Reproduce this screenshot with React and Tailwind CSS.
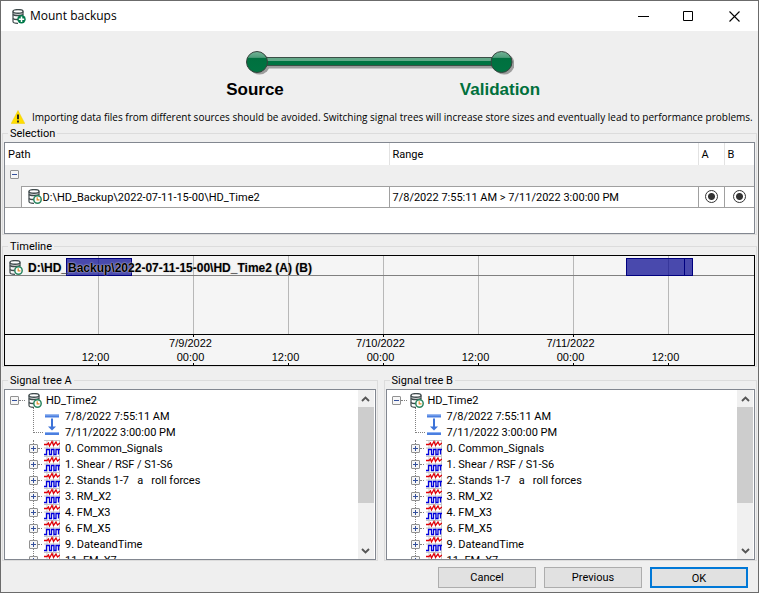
import React, { useState } from 'react';

const HOUR_WIDTH = 95 / 12;
const CHART_WIDTH = 749;

const ticks = [
  { at: 93, time: '12:00' },
  { at: 188, time: '00:00', day: '7/9/2022' },
  { at: 283, time: '12:00' },
  { at: 378, time: '00:00', day: '7/10/2022' },
  { at: 473, time: '12:00' },
  { at: 568, time: '00:00', day: '7/11/2022' },
  { at: 663, time: '12:00' },
];

const blocks = [
  { at: 61, hours: 8.4 },
  { at: 621, hours: 7.5 },
  { at: 679, hours: 1.2 },
];

const signals = [
  '0. Common_Signals',
  '1. Shear / RSF / S1-S6',
  '2. Stands 1-7   a   roll forces',
  '3. RM_X2',
  '4. FM_X3',
  '6. FM_X5',
  '9. DateandTime',
  '11. FM_X7',
];

const pct = (px) => `${(px / CHART_WIDTH) * 100}%`;

function DatabaseIcon({ badge = 'clock' }) {
  return (
    <svg width="14" height="15" viewBox="0 0 14 15" fill="none" className="shrink-0">
      <path d="M1 2.5v10c0 1 2 1.800 5 1.800M11 2.500v4" stroke="#3f4a4c" strokeWidth="1.2" />
      <ellipse cx="6" cy="2.400" rx="5" ry="1.800" fill="#fff" stroke="#3f4a4c" strokeWidth="1.400" />
      <path d="M1 5.500c1 1.300 9 1.300 10 0M1 9.500c1 1 3 1.200 5 1.100" stroke="#3f4a4c" strokeWidth="1.500" />
      {badge === 'clock' ? (
        <>
          <circle cx="9.500" cy="10.500" r="3.700" fill="#fff" stroke="#2a8560" strokeWidth="1.500" />
          <path d="M9.200 8.300v2.500h2.300" stroke="#e3902c" strokeWidth="1.200" />
        </>
      ) : (
        <>
          <circle cx="9.500" cy="10.300" r="4.200" fill="#00794a" />
          <path d="M9.500 7.600v5.400M6.800 10.300h5.400" stroke="#fff" strokeWidth="1.500" />
        </>
      )}
    </svg>
  );
}

function RangeIcon() {
  return (
    <svg width="14" height="22" viewBox="0 0 14 22" className="shrink-0">
      <path d="M0 .5h14v3H0zM0 18h14v3H0z" fill="#4b7fe0" />
      <path d="M0 .5h14v1H0zM0 18h14v1H0z" fill="#8db1f2" />
      <path d="M6 4.500h2v8h3l-4 4-4-4h3z" fill="#3d73d8" />
    </svg>
  );
}

function SignalIcon() {
  return (
    <svg width="16" height="16" viewBox="0 0 16 16" className="shrink-0">
      <path d="M0 0h16v16H0z" fill="#fff" />
      <path d="M0 .5h16M0 8h16M3 0v16M9.500 0v16M15.500 0v16" stroke="#c6c6c6" />
      <path d="M0 4.500h3L4.500 3l1 3L8 1.500l1.500 4L12 2l1.500 3L16 3" fill="none" stroke="#e00008" strokeWidth="1.300" />
      <path d="M0 14.500h2.500v-5h3v5h2v-5H10v5h2v-5h2.500v5M14.500 9.500H16" fill="none" stroke="#0000dc" strokeWidth="1.300" />
    </svg>
  );
}

function Expander({ open, label }) {
  return (
    <button aria-label={label} className="flex h-[9px] w-[9px] shrink-0 items-center justify-center rounded-[1px] border border-[#919191] bg-[#f6f6f6]">
      <svg width="7" height="7" viewBox="0 0 7 7" className="shrink-0">
        <path d={open ? 'M1 3.5h5' : 'M1 3.5h5M3.5 1v5'} stroke="#34509c" />
      </svg>
    </button>
  );
}

function Group({ title, children }) {
  return (
    <fieldset className="min-w-0 border border-[#dcdcdc] px-px pt-[2px]">
      <legend className="ml-[4px] px-[2px] pt-[2px] leading-[12px]">{title}</legend>
      {children}
    </fieldset>
  );
}

function Stepper() {
  return (
    <div className="flex flex-col items-center pt-[19px] font-['Liberation_Sans',Arial,sans-serif]">
      <svg width="269" height="26" viewBox="0 0 269 26">
        <defs>
          <linearGradient id="shine" x1="0" y1="0" x2="0" y2="1">
            <stop offset="0" stopColor="#75b397" />
            <stop offset=".28" stopColor="#4f9d7b" />
            <stop offset=".32" stopColor="#00703f" />
            <stop offset="1" stopColor="#007442" />
          </linearGradient>
        </defs>
        <g fill="#9d9d9d">
          <circle cx="14.500" cy="14" r="10.500" />
          <circle cx="259" cy="14" r="10.500" />
          <path d="M14 10h244v8.500H14z" />
        </g>
        <path d="M12 7.500h245v8H12z" fill="#007442" stroke="#3b4f46" />
        <path d="M12 8h245v3H12z" fill="#62a888" />
        <circle cx="12" cy="12" r="10.500" fill="url(#shine)" stroke="#37443e" />
        <circle cx="256.500" cy="12" r="10.500" fill="url(#shine)" stroke="#37443e" />
      </svg>
      <div className="mr-[4px] grid w-[490px] grid-cols-2 text-center text-[17px] leading-[28px] font-bold">
        <span>Source</span>
        <span className="text-[#00703c]">Validation</span>
      </div>
    </div>
  );
}

function SelectionTable() {
  const [inA, setInA] = useState(true);
  const [inB, setInB] = useState(true);
  const radio = "m-auto block h-[13px] w-[13px] appearance-none rounded-full border border-[#333] bg-white checked:bg-[radial-gradient(circle,#333_3px,#fff_4px)]";

  return (
    <div className="h-[92px] border border-[#828790] bg-white leading-[16px]">
      <table className="w-full table-fixed border-collapse text-left">
        <colgroup>
          <col className="w-[16px]" />
          <col />
          <col className="w-[309px]" />
          <col className="w-[26px]" />
          <col className="w-[30px]" />
        </colgroup>
        <thead>
          <tr className="h-[22px]">
            <th colSpan={2} className="px-[3px] pt-[2px] font-normal">Path</th>
            <th className="border-l border-[#e2e2e2] px-[3px] pt-[2px] font-normal">Range</th>
            <th className="border-l border-[#e2e2e2] px-[3px] pt-[2px] font-normal">A</th>
            <th className="border-l border-[#e2e2e2] px-[3px] pt-[2px] font-normal">B</th>
          </tr>
        </thead>
        <tbody>
          <tr className="h-[21px] bg-[#efefef]">
            <td colSpan={5} className="px-[5px] pb-[2px]"><Expander open label="Collapse group" /></td>
          </tr>
          <tr className="h-[21px]">
            <td className="border-b border-[#a0a0a0] bg-[#efefef]"></td>
            <td className="border border-[#a0a0a0] px-[6px]">
              <div className="flex items-center gap-px whitespace-nowrap">
                <DatabaseIcon />
                <span className="pt-[2px]">D:\HD_Backup\2022-07-11-15-00\HD_Time2</span>
              </div>
            </td>
            <td className="border border-[#a0a0a0] px-[3px] pt-[2px] whitespace-nowrap">7/8/2022 7:55:11 AM &gt; 7/11/2022 3:00:00 PM</td>
            <td className="border border-[#a0a0a0]">
              <input type="radio" name="treeA" aria-label="Use for A" className={radio} checked={inA} onChange={() => setInA(true)} />
            </td>
            <td className="border-y border-[#a0a0a0]">
              <input type="radio" name="treeB" aria-label="Use for B" className={radio} checked={inB} onChange={() => setInB(true)} />
            </td>
          </tr>
        </tbody>
      </table>
    </div>
  );
}

function Timeline() {
  return (
    <div className="border border-black bg-[#f5f5f5] font-['Liberation_Sans',Arial,sans-serif]">
      <div className="relative h-[79px] border-b border-black">
        {ticks.map((t) => (
          <span key={t.at} className="absolute inset-y-0 w-px bg-[#b8b8b8]" style={{ left: pct(t.at) }} />
        ))}
        <div className="absolute inset-x-0 top-[19px] h-px bg-[#808080]" />
        {blocks.map((b) => (
          <span
            key={b.at}
            className="absolute top-[2px] h-[18px] border border-[#00007f] bg-[#00008f]/70"
            style={{ left: pct(b.at), width: pct(b.hours * HOUR_WIDTH) }}
          />
        ))}
        <div className="relative flex h-[20px] items-center gap-[5px] pt-[3px] pl-[4px] text-[12px] font-bold whitespace-nowrap">
          <DatabaseIcon />
          <span className="[text-shadow:0_0_2px_#d0d0d0,0_0_1px_#c0c0c0]">D:\HD_Backup\2022-07-11-15-00\HD_Time2 (A) (B)</span>
        </div>
      </div>
      <div className="relative h-[30px]">
        {ticks.map((t) => (
          <div key={t.at} className="absolute inset-y-0 flex w-px flex-col justify-end" style={{ left: pct(t.at) }}>
            {t.day && <span className="absolute top-0 left-0 h-[2px] w-px bg-black" />}
            <span className="absolute bottom-0 left-0 h-[2px] w-px bg-black" />
            <div className="flex flex-col items-center self-center pr-[6px] pb-px leading-[14px] whitespace-nowrap">
              <span>{t.day}</span>
              <span>{t.time}</span>
            </div>
          </div>
        ))}
      </div>
    </div>
  );
}

function ScrollArrow({ up }) {
  return (
    <button aria-label={up ? 'Scroll up' : 'Scroll down'} className="flex h-[17px] w-full items-center justify-center">
      <svg width="9" height="6" viewBox="0 0 9 6">
        <path d={up ? 'M1 5l3.500-3.500L8 5' : 'M1 1l3.500 3.500L8 1'} fill="none" stroke="#555" strokeWidth="1.900" />
      </svg>
    </button>
  );
}

function SignalTree({ name }) {
  return (
    <Group title={`Signal tree ${name}`}>
      <div className="flex h-[171px] border border-[#828790] bg-white">
        <div className="min-w-0 flex-1 overflow-hidden pt-[2px] pl-[5px] leading-[16px] whitespace-pre">
          <div className="flex h-[16px] items-center">
            <Expander open label="Collapse HD_Time2" />
            <span className="mr-[3px] w-[6px] border-t border-dotted border-[#808080]" />
            <DatabaseIcon />
            <span className="ml-[4px] pt-[2px]">HD_Time2</span>
          </div>
          <div className="ml-[23px] flex h-[32px]">
            <span className="h-[25px] w-[10px] border-b border-l border-dotted border-[#808080]" />
            <span className="flex w-[22px] items-center pt-[2px] pl-[2px]"><RangeIcon /></span>
            <div className="pt-px">
              <div>7/8/2022 7:55:11 AM</div>
              <div>7/11/2022 3:00:00 PM</div>
            </div>
          </div>
          <ul className="ml-[23px] border-l border-dotted border-[#808080]">
            {signals.map((s) => (
              <li key={s} className="-ml-[5px] flex h-[16px] items-center">
                <Expander label={`Expand ${s}`} />
                <span className="mr-[2px] w-[4px] border-t border-dotted border-[#808080]" />
                <SignalIcon />
                <span className="ml-[5px] pt-[2px]">{s}</span>
              </li>
            ))}
          </ul>
        </div>
        <div className="mr-px flex w-[16px] flex-col bg-[#f0f0f0]">
          <ScrollArrow up />
          <div className="flex-1">
            <div className="h-[96px] bg-[#cdcdcd]" />
          </div>
          <ScrollArrow />
        </div>
      </div>
    </Group>
  );
}

export default function App() {
  return (
    <div className="flex min-h-screen flex-col border border-[#6b6b6b] bg-[#efefef] font-['Roboto',sans-serif] text-[11px] text-black">
      <header className="flex h-[30px] items-center bg-white pl-[11px] font-['Open_Sans',sans-serif] text-[12px]">
        <DatabaseIcon badge="plus" />
        <h1 className="ml-[4px] flex-1">Mount backups</h1>
        <button aria-label="Minimize" className="flex h-full w-[45px] items-center justify-center">
          <svg width="11" height="11" viewBox="0 0 11 11"><path d="M0 5.500h11" stroke="#000" /></svg>
        </button>
        <button aria-label="Maximize" className="flex h-full w-[45px] items-center justify-center">
          <svg width="11" height="11" viewBox="0 0 11 11"><path d="M.5.5h9v9h-9z" fill="none" stroke="#000" /></svg>
        </button>
        <button aria-label="Close" className="flex h-full w-[47px] items-center justify-center">
          <svg width="11" height="11" viewBox="0 0 11 11"><path d="M.5.5l10 10M10.500.5l-10 10" stroke="#000" strokeWidth="1.100" /></svg>
        </button>
      </header>

      <Stepper />

      <p className="mt-[5px] flex h-[16px] items-center gap-[7px] pl-[10px] font-['Open_Sans',sans-serif] text-[10px] whitespace-nowrap">
        <svg width="14" height="14" viewBox="0 0 14 14" className="shrink-0">
          <path d="M7 .5L13.800 13.500H.2z" fill="#ffde00" stroke="#f0cc00" strokeWidth=".5" />
          <path d="M7 4.500v4.800M7 10.500v2" stroke="#222" strokeWidth="1.900" />
        </svg>
        Importing data files from different sources should be avoided. Switching signal trees will increase store sizes and eventually lead to performance problems.
      </p>

      <main className="mt-px flex flex-col px-px">
        <Group title="Selection"><SelectionTable /></Group>
        <div className="mt-[4px]">
          <Group title="Timeline"><Timeline /></Group>
        </div>
        <div className="mt-[6px] grid grid-cols-[375fr_373fr] gap-[6px]">
          <SignalTree name="A" />
          <SignalTree name="B" />
        </div>
      </main>

      <footer className="flex justify-end gap-[8px] pt-[6px] pr-[10px] pb-[3px]">
        <button className="h-[21px] w-[98px] border border-[#adadad] bg-[#e1e1e1] pt-[2px]">Cancel</button>
        <button className="h-[21px] w-[98px] border border-[#adadad] bg-[#e1e1e1] pt-[2px]">Previous</button>
        <button className="h-[21px] w-[98px] border-2 border-[#0078d7] bg-[#e1e1e1] pt-[2px]">OK</button>
      </footer>
    </div>
  );
}
